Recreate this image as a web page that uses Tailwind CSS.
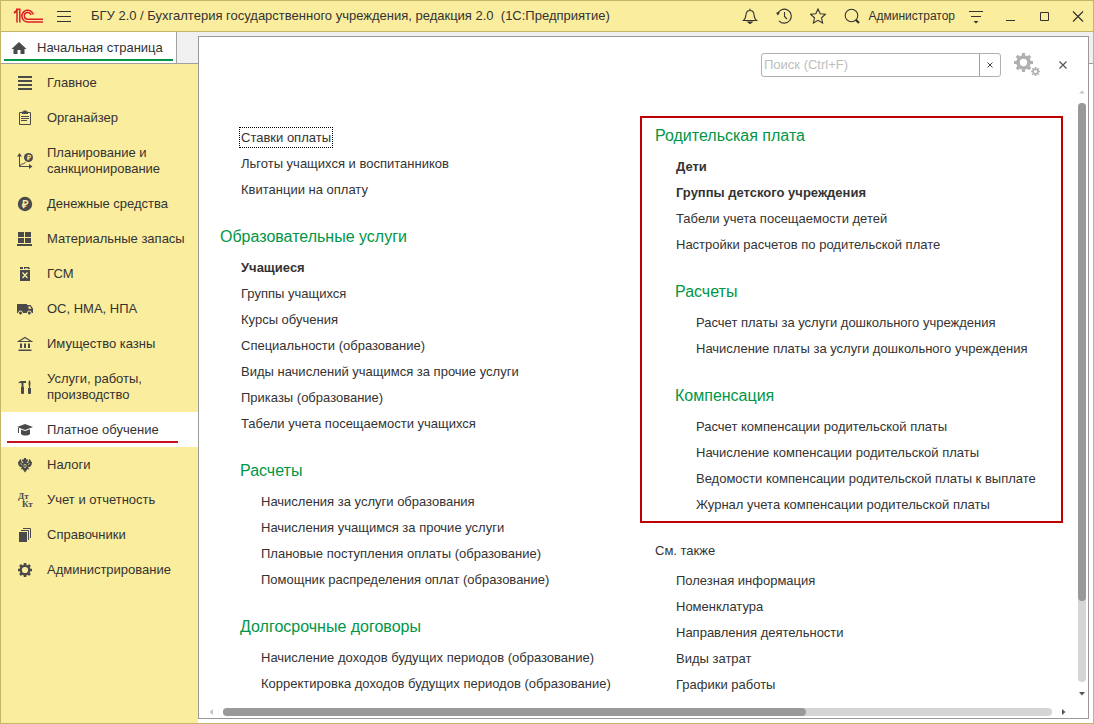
<!DOCTYPE html>
<html lang="ru">
<head>
<meta charset="utf-8">
<meta name="viewport" content="width=device-width, initial-scale=1">
<title>БГУ 2.0 / Бухгалтерия государственного учреждения</title>
<script src="https://cdn.jsdelivr.net/npm/@tailwindcss/browser@4"></script>
</head>
<body class="flex h-screen flex-col overflow-hidden border border-[#c5b768] bg-white font-['Liberation_Sans',Arial,sans-serif] text-[13px] leading-4 text-[#333333]">

<header class="flex h-[31px] shrink-0 items-center border-b border-[#c5b768] bg-[#fbed9e] pr-[7px]">
  <svg class="ml-3 h-4 w-8 shrink-0" viewBox="0 0 32 16" fill="none" stroke="#dd1f26" stroke-width="1.5" role="img" aria-label="1С">
    <path d="M1 5.2 4 2.8V14.5M3 1.2H6.8V14.5M1.2 4.5 5 1.2"/>
    <path d="M20.4 6.5A5.9 5.9 0 1 0 15.2 14H30"/>
    <path d="M18 7A3.4 3.4 0 1 0 15 11.3H30"/>
  </svg>
  <button type="button" aria-label="Меню" class="ml-3 h-4 w-4">
    <svg viewBox="0 0 16 16" class="h-4 w-4" stroke="#333" stroke-width="1"><path d="M0 3.5H14M0 8.5H14M0 13.5H14"/></svg>
  </button>
  <h1 class="ml-[18px] whitespace-pre">БГУ 2.0 / Бухгалтерия государственного учреждения, редакция 2.0  (1С:Предприятие)</h1>
  <div class="ml-auto flex items-center">
    <button type="button" aria-label="Уведомления" class="mr-[18px] h-4 w-4">
      <svg viewBox="0 0 16 16" class="h-4 w-4" fill="none" stroke="#333" stroke-width="1.1"><path d="M1.500 12.500H14.500C12.500 11 12.300 9.500 12 6.500 11.700 3.800 10.300 2.500 8 2.500S4.300 3.800 4 6.500C3.700 9.500 3.500 11 1.500 12.500ZM8 .8V2.500"/><path d="M6 14H10L8 15.500Z" fill="#333"/></svg>
    </button>
    <button type="button" aria-label="История" class="mr-[18px] h-4 w-4">
      <svg viewBox="0 0 16 16" class="h-4 w-4" fill="none" stroke="#333" stroke-width="1.1"><path d="M1.600 6A7 7 0 1 1 3 12.800M8.500 4V8.500L11 11"/><path d="M0 4.500H4L1.800 7.500Z" fill="#333" stroke="none"/></svg>
    </button>
    <button type="button" aria-label="Избранное" class="mr-[18px] h-4 w-4">
      <svg viewBox="0 0 16 16" class="h-4 w-4" fill="none" stroke="#333" stroke-width="1.1"><path d="M8 1 10.200 5.800 15.300 6.300 11.500 9.800 12.600 15 8 12.300 3.400 15 4.500 9.800.7 6.300 5.800 5.800Z"/></svg>
    </button>
    <button type="button" aria-label="Поиск" class="mr-2 h-4 w-4">
      <svg viewBox="0 0 16 16" class="h-4 w-4" fill="none" stroke="#333"><circle cx="7.500" cy="7.500" r="6.300" stroke-width="1.100"/><path d="M11.800 11.800 15 15" stroke-width="2.200"/></svg>
    </button>
    <button type="button" class="mr-[13px] text-[12px]">Администратор</button>
    <button type="button" aria-label="Настройки окна" class="mr-[19px] h-4 w-4">
      <svg viewBox="0 0 16 16" class="h-4 w-4" stroke="#333"><path d="M1 3.500H15M3 8.500H13"/><path d="M5.500 13H10.500L8 15.500Z" fill="#333" stroke="none"/></svg>
    </button>
    <button type="button" aria-label="Свернуть" class="mr-[18px] h-4 w-4">
      <svg viewBox="0 0 16 16" class="h-4 w-4" stroke="#333"><path d="M3 12.500H12"/></svg>
    </button>
    <button type="button" aria-label="Развернуть" class="mr-[17px] h-4 w-4">
      <svg viewBox="0 0 16 16" class="h-4 w-4" fill="none" stroke="#333"><path d="M3.500 4.500H11.500V12.500H3.500Z"/></svg>
    </button>
    <button type="button" aria-label="Закрыть" class="h-4 w-4">
      <svg viewBox="0 0 16 16" class="h-4 w-4" stroke="#333" stroke-width="1.200"><path d="M3 3.500 13 13.500M13 3.500 3 13.500"/></svg>
    </button>
  </div>
</header>

<div class="flex min-h-0 flex-1">
  <div class="flex w-[197px] shrink-0 flex-col">
    <div class="flex h-8 shrink-0 border-b border-[#a0a0a0] bg-[#f0f0f0]">
      <a href="#" class="flex w-44 flex-col border-r border-[#a0a0a0] bg-white px-[3px]">
        <span class="flex flex-1 items-center gap-2.5 pt-1 pl-[7px]">
          <svg viewBox="0 0 16 14" class="h-3.5 w-4" fill="#4a4a4a"><path d="M8 1 15.500 8H13.500V13H9.500V9H6.500V13H2.500V8H.5Z"/></svg>
          Начальная страница
        </span>
        <span class="mb-0.5 h-0.5 bg-[#009646]"></span>
      </a>
    </div>
    <nav class="flex-1 bg-[#fbed9e] pt-px">
      <ul>
        <li><a href="#" class="flex h-[35px] items-center gap-3.5 pl-4"><svg viewBox="0 0 16 16" class="h-4 w-4 shrink-0" fill="#4a4a4a"><path d="M1 1H15V3H1ZM1 5H15V7H1ZM1 9H15V11H1ZM1 13H15V15H1Z"/></svg>Главное</a></li>
        <li><a href="#" class="flex h-[35px] items-center gap-3.5 pl-4"><svg viewBox="0 0 16 16" class="h-4 w-4 shrink-0" fill="none" stroke="#4a4a4a"><path d="M2.500 2.500H13.500V14.500H2.500ZM4 6.500H12M4 8.500H12M4 10.500H10"/><path d="M5 1.500H6.500V.5H9.500V1.500H11V4H5Z" fill="#4a4a4a" stroke="none"/></svg>Органайзер</a></li>
        <li><a href="#" class="flex h-[51px] items-center gap-3.5 pl-4"><svg viewBox="0 0 16 16" class="h-4 w-4 shrink-0 overflow-visible" fill="none" stroke="#4a4a4a"><path d="M2.500 1V13.500H14M2.500 13.500 4.500 11H6.500L8.500 9"/><path d="M2.500 0 5 3.500H0ZM15.500 13.500 12 11V16Z" fill="#4a4a4a" stroke="none"/><circle cx="11.500" cy="4.500" r="4.500" fill="#4a4a4a" stroke="none"/><text x="11.500" y="7" text-anchor="middle" font-size="7" font-weight="bold" fill="#fbed9e" stroke="none">₽</text></svg><span>Планирование и<br>санкционирование</span></a></li>
        <li><a href="#" class="flex h-[35px] items-center gap-3.5 pl-4"><svg viewBox="0 0 16 16" class="h-4 w-4 shrink-0" fill="#4a4a4a"><circle cx="8" cy="8" r="7.200"/><text x="8" y="12" text-anchor="middle" font-size="11" font-weight="bold" fill="#fbed9e">₽</text></svg>Денежные средства</a></li>
        <li><a href="#" class="flex h-[35px] items-center gap-3.5 pl-4"><svg viewBox="0 0 16 16" class="h-4 w-4 shrink-0" fill="#4a4a4a"><path d="M1 1H7V6H1ZM8 1H14V6H8ZM1 7H7V12H1ZM8 7H14V12H8ZM0 13H15V15H0Z"/></svg>Материальные запасы</a></li>
        <li><a href="#" class="flex h-[35px] items-center gap-3.5 pl-4"><svg viewBox="0 0 16 16" class="h-4 w-4 shrink-0"><path d="M3 4H13V15H3ZM3 1H6V3H3ZM7 1H12L13 3H11L10.500 2.200H8V3H7Z" fill="#4a4a4a"/><path d="M5.500 6.500 10.500 12M10.500 6.500 5.500 12" stroke="#fbed9e" stroke-width="1.300"/></svg>ГСМ</a></li>
        <li><a href="#" class="flex h-[35px] items-center gap-3.5 pl-4"><svg viewBox="0 0 16 16" class="h-4 w-4 shrink-0"><path d="M0 3H10V12H0ZM10 4H13.500L16 7.500V12H10Z" fill="#4a4a4a"/><path d="M11.500 5.300H13L14.500 7.800H11.500Z" fill="#fbed9e"/><circle cx="3.500" cy="12" r="2" fill="#4a4a4a" stroke="#fbed9e"/><circle cx="12.300" cy="12" r="2" fill="#4a4a4a" stroke="#fbed9e"/></svg>ОС, НМА, НПА</a></li>
        <li><a href="#" class="flex h-[35px] items-center gap-3.5 pl-4"><svg viewBox="0 0 16 16" class="h-4 w-4 shrink-0"><path d="M1.500 5.500 8 1.500 14.500 5.500Z" fill="none" stroke="#4a4a4a" stroke-width="1.200"/><path d="M3 7.500H5V12H3ZM7 7.500H9V12H7ZM11 7.500H13V12H11ZM1.500 13.500H14.500V15H1.500Z" fill="#4a4a4a"/></svg>Имущество казны</a></li>
        <li><a href="#" class="flex h-[51px] items-center gap-3.5 pl-4"><svg viewBox="0 0 16 16" class="h-4 w-4 shrink-0" fill="#4a4a4a"><path d="M1 4.500C2 2.500 3.500 2 5 2H9V4H6.500V8H4.500V4.200C3 4 2 4 1 4.500ZM4 8H7V14L6.500 15H4.500L4 14ZM12 1.500H13L13.500 4 13 9H12L11.500 4ZM11 9H14V14L13.500 15H11.500L11 14Z"/></svg><span>Услуги, работы,<br>производство</span></a></li>
        <li class="relative bg-white"><a href="#" aria-current="page" class="flex h-[35px] items-center gap-3.5 pl-4"><svg viewBox="0 0 16 16" class="h-4 w-4 shrink-0" fill="#4a4a4a"><path d="M8 2 16 5 8 8 0 5ZM4 7.500 8 9 13 7.200V12C11 14 6 14 4 12ZM1 6H2V11H1Z"/></svg>Платное обучение</a><span class="absolute right-5 bottom-1 left-1.5 h-0.5 bg-[#c8101a]"></span></li>
        <li><a href="#" class="flex h-[35px] items-center gap-3.5 pl-4"><svg viewBox="0 0 16 16" class="h-4 w-4 shrink-0"><path d="M7 1H9V2.500L10.500 2 11 4 9.500 5.500 11 6 12 3 13 1.500V4L14 2.500V5L15.200 4.500 14.500 8 13 10H11L12.500 12.500 10.500 12 9.500 13.500 8 15.500 6.500 13.500 5.500 12 3.500 12.500 5 10H3L1.500 8 .8 4.500 2 5V2.500L3 4V1.500L4 3 5 6 6.500 5.500 5 4 5.500 2 7 2.500Z" fill="#4a4a4a"/><path d="M3.500 6 5 8.500M12.500 6 11 8.500M7 7.500H9V10L8 11 7 10Z" stroke="#fbed9e" stroke-width=".6" fill="none"/></svg>Налоги</a></li>
        <li><a href="#" class="flex h-[35px] items-center gap-3.5 pl-4"><svg viewBox="0 0 16 16" class="h-4 w-4 shrink-0 overflow-visible font-['Liberation_Serif',serif]" fill="#4a4a4a" font-size="9" font-weight="bold"><text x="1" y="7">Дт</text><text x="5" y="15">Кт</text></svg>Учет и отчетность</a></li>
        <li><a href="#" class="flex h-[35px] items-center gap-3.5 pl-4"><svg viewBox="0 0 16 16" class="h-4 w-4 shrink-0"><path d="M2 5H10V15H2Z" fill="#4a4a4a"/><path d="M4 3.500H11.500V13M6 1.500H13.500V11" fill="none" stroke="#4a4a4a"/></svg>Справочники</a></li>
        <li><a href="#" class="flex h-[35px] items-center gap-3.5 pl-4"><svg viewBox="0 0 16 16" class="h-4 w-4 shrink-0" fill="none" stroke="#4a4a4a"><circle cx="8" cy="8" r="4.300" stroke-width="2.400"/><path d="M8 1V3M8 13V15M1 8H3M13 8H15M3 3 4.500 4.500M11.500 11.500 13 13M3 13 4.500 11.500M11.500 4.500 13 3" stroke-width="2.600"/></svg>Администрирование</a></li>
      </ul>
    </nav>
  </div>

  <div class="flex min-w-0 flex-1 flex-col bg-white pb-1">
    <div class="h-1 shrink-0 bg-[#f0f0f0]"></div>
    <main class="flex min-h-0 flex-1 flex-col border border-[#999999] bg-white">
      <div class="flex h-[53px] shrink-0 items-center justify-end pt-0.5 pr-[19px]">
        <div class="flex h-6 w-60 rounded-[3px] border border-[#b0b0b0]">
          <input type="search" aria-label="Поиск" placeholder="Поиск (Ctrl+F)" class="min-w-0 flex-1 px-0.5 outline-none placeholder:text-[#bdbdbd]">
          <button type="button" aria-label="Очистить" class="flex w-[21px] items-center justify-center border-l border-[#a0a0a0]">
            <svg viewBox="0 0 6 6" class="h-1.5 w-1.5" stroke="#444"><path d="M.5.5 5.500 5.500M5.500.5.5 5.500"/></svg>
          </button>
        </div>
        <button type="button" aria-label="Настройки" class="ml-[13px] h-6 w-[26px]">
          <svg viewBox="0 0 26 24" class="h-6 w-[26px]" fill="none" stroke="#b0b0b0"><circle cx="9.500" cy="9.500" r="5.500" stroke-width="3.600"/><path d="M9.500 0V3M9.500 16V19M0 9.500H3M16 9.500H19M2.800 2.800 5 5M14 14 16.200 16.200M2.800 16.200 5 14M14 5 16.200 2.800" stroke-width="3.200"/><circle cx="21.500" cy="18.500" r="2.400" stroke-width="1.600"/><path d="M21.500 14V16M21.500 21V23M17 18.500H19M24 18.500H26M18.300 15.300 19.500 16.500M23.500 20.500 24.700 21.700M18.300 21.700 19.500 20.500M23.500 16.500 24.700 15.300" stroke-width="1.500"/></svg>
        </button>
        <button type="button" aria-label="Закрыть панель" class="ml-[17px] h-3 w-3">
          <svg viewBox="0 0 12 12" class="h-3 w-3" stroke="#555" stroke-width="1.200"><path d="M2.500 2.500 9.500 9.500M9.500 2.500 2.500 9.500"/></svg>
        </button>
      </div>

      <div class="flex min-h-0 flex-1">
        <div class="grid min-w-0 flex-1 grid-cols-[420fr_423fr] items-start overflow-hidden pt-[26px] pr-[15px] pl-[21px]">
          <div class="pt-[9px] whitespace-nowrap">
            <ul class="pl-5 leading-[26px]">
              <li><a href="#" class="px-px py-0.5 outline-1 outline-dotted outline-black">Ставки оплаты</a></li>
              <li><a href="#" class="px-px">Льготы учащихся и воспитанников</a></li>
              <li><a href="#" class="px-px">Квитанции на оплату</a></li>
            </ul>
            <h2 class="mt-[22px] mb-1.5 text-[16px] leading-6 text-[#009646]">Образовательные услуги</h2>
            <ul class="pl-[21px] leading-[26px]">
              <li><a href="#" class="font-bold">Учащиеся</a></li>
              <li><a href="#">Группы учащихся</a></li>
              <li><a href="#">Курсы обучения</a></li>
              <li><a href="#">Специальности (образование)</a></li>
              <li><a href="#">Виды начислений учащимся за прочие услуги</a></li>
              <li><a href="#">Приказы (образование)</a></li>
              <li><a href="#">Табели учета посещаемости учащихся</a></li>
            </ul>
            <h3 class="mt-[22px] mb-1.5 pl-5 text-[16px] leading-6 text-[#009646]">Расчеты</h3>
            <ul class="pl-[41px] leading-[26px]">
              <li><a href="#">Начисления за услуги образования</a></li>
              <li><a href="#">Начисления учащимся за прочие услуги</a></li>
              <li><a href="#">Плановые поступления оплаты (образование)</a></li>
              <li><a href="#">Помощник распределения оплат (образование)</a></li>
            </ul>
            <h3 class="mt-[22px] mb-1.5 pl-5 text-[16px] leading-6 text-[#009646]">Долгосрочные договоры</h3>
            <ul class="pl-[41px] leading-[26px]">
              <li><a href="#">Начисление доходов будущих периодов (образование)</a></li>
              <li><a href="#">Корректировка доходов будущих периодов (образование)</a></li>
            </ul>
          </div>

          <div class="whitespace-nowrap">
            <section class="border-2 border-[#c00000] pt-1.5 pb-[3px] pl-[13px]">
              <h2 class="mb-1.5 text-[16px] leading-6 text-[#009646]">Родительская плата</h2>
              <ul class="pl-[21px] leading-[26px]">
                <li><a href="#" class="font-bold">Дети</a></li>
                <li><a href="#" class="font-bold">Группы детского учреждения</a></li>
                <li><a href="#">Табели учета посещаемости детей</a></li>
                <li><a href="#">Настройки расчетов по родительской плате</a></li>
              </ul>
              <h3 class="mt-[22px] mb-1.5 pl-5 text-[16px] leading-6 text-[#009646]">Расчеты</h3>
              <ul class="pl-[41px] leading-[26px]">
                <li><a href="#">Расчет платы за услуги дошкольного учреждения</a></li>
                <li><a href="#">Начисление платы за услуги дошкольного учреждения</a></li>
              </ul>
              <h3 class="mt-[22px] mb-1.5 pl-5 text-[16px] leading-6 text-[#009646]">Компенсация</h3>
              <ul class="pl-[41px] leading-[26px]">
                <li><a href="#">Расчет компенсации родительской платы</a></li>
                <li><a href="#">Начисление компенсации родительской платы</a></li>
                <li><a href="#">Ведомости компенсации родительской платы к выплате</a></li>
                <li><a href="#">Журнал учета компенсации родительской платы</a></li>
              </ul>
            </section>
            <section class="pt-[15px] pl-[15px]">
              <h2 class="mb-1 leading-[26px]">См. также</h2>
              <ul class="pl-[21px] leading-[26px]">
                <li><a href="#">Полезная информация</a></li>
                <li><a href="#">Номенклатура</a></li>
                <li><a href="#">Направления деятельности</a></li>
                <li><a href="#">Виды затрат</a></li>
                <li><a href="#">Графики работы</a></li>
              </ul>
            </section>
          </div>
        </div>

        <div class="mr-0.5 flex w-2 shrink-0 flex-col items-center" aria-hidden="true">
          <svg viewBox="0 0 8 13" class="h-[13px] w-2 shrink-0" fill="#c4c4c4"><path d="M1 3.500H7L4 .5Z"/></svg>
          <div class="flex w-2 flex-1 flex-col rounded-full bg-[#d5d5d5]"><div class="h-[86%] rounded-full bg-[#999999]"></div></div>
          <svg viewBox="0 0 8 22" class="h-[22px] w-2 shrink-0" fill="#555"><path d="M1 10H7L4 13.500Z"/></svg>
        </div>
      </div>

      <div class="flex h-3.5 shrink-0 items-center pt-0.5 pl-2" aria-hidden="true">
        <svg viewBox="0 0 16 8" class="h-2 w-4 shrink-0" fill="#c4c4c4"><path d="M6 1V7L2.500 4Z"/></svg>
        <div class="h-2 flex-1 rounded-full bg-[#d5d5d5]"><div class="h-2 w-[70.3%] rounded-full bg-[#999999]"></div></div>
        <svg viewBox="0 0 36 8" class="h-2 w-9 shrink-0" fill="#555"><path d="M10 1V7L13.500 4Z"/></svg>
      </div>
    </main>
  </div>

  <div class="w-1 shrink-0 bg-white">
    <div class="h-8 border-b border-[#a0a0a0] bg-[#f0f0f0]"></div>
  </div>
</div>
</body>
</html>
